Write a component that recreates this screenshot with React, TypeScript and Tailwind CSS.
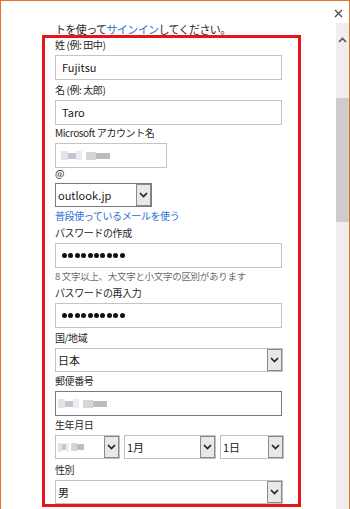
import React from 'react';

const font = "font-['Noto_Sans_CJK_JP','Noto_Sans',sans-serif]";

function Chevron({ className = '' }: { className?: string }) {
  return (
    <svg width="9" height="6" viewBox="0 0 9 6" className={className}>
      <polyline points="1,1 4.5,4.5 8,1" fill="none" stroke="#1f1f1f" strokeWidth="1.6" />
    </svg>
  );
}

function Label({ text, h }: { text: string; h: string }) {
  return (
    <div className={`flex items-end pb-[4px] text-[10px] leading-[12px] tracking-[-0.4px] text-[#262626] ${h}`}>
      {text}
    </div>
  );
}

function TextField({ value, dark }: { value?: React.ReactNode; dark?: boolean }) {
  return (
    <div
      className={`flex h-[25px] w-[227px] items-center border bg-white pl-[6px] text-[11px] text-[#1a1a1a] ${
        dark ? 'border-[#7a7a7a]' : 'border-[#c4c4c4]'
      }`}
    >
      {value}
    </div>
  );
}

function Dots() {
  return (
    <div className="flex gap-[1.4px]">
      {Array.from({ length: 10 }).map((_, i) => (
        <span key={i} className="h-[5px] w-[5px] rounded-full bg-[#111]" />
      ))}
    </div>
  );
}

function Blur({ w = 'w-[50px]' }: { w?: string }) {
  return (
    <div className={`flex h-[9px] items-center ${w}`}>
      <span className="h-[9px] w-[7px] bg-[#e4e4e8]" />
      <span className="h-[6px] w-[8px] bg-[#c7c3cf]" />
      <span className="h-[9px] w-[6px] bg-[#ececef]" />
      <span className="h-[9px] w-[4px] bg-white" />
      <span className="h-[8px] w-[10px] bg-[#d6d6da]" />
      <span className="h-[6px] w-[14px] bg-[#bcbcc2]" />
    </div>
  );
}

function Select({
  value,
  w,
  outer = 'border-[#c0c0c0]',
}: {
  value: React.ReactNode;
  w: string;
  outer?: string;
}) {
  return (
    <div className={`flex h-[24px] items-stretch border bg-white ${outer} ${w}`}>
      <div className="flex flex-1 items-center pl-[2px] text-[11px] text-[#1a1a1a]">{value}</div>
      <div className="flex w-[15px] items-center justify-center border border-[#8a8a8a] bg-[#e8e8e8]">
        <Chevron />
      </div>
    </div>
  );
}

export default function App() {
  return (
    <div className={`flex h-[509px] w-[350px] flex-col overflow-hidden border-x border-t border-[#e8702c] bg-white ${font}`}>
      <div className="flex h-[22px] shrink-0 justify-end pr-[6px] pt-[8px]">
        <svg width="9" height="9" viewBox="0 0 9 9">
          <path d="M1 1 L8 8 M8 1 L1 8" stroke="#4a4a4a" strokeWidth="1.3" />
        </svg>
      </div>

      <div className="flex flex-1">
        <main className="flex-1 pl-[41px]">
          <p className="h-[12px] pl-[13px] text-[11px] leading-[12px] tracking-[-0.6px] text-[#262626]">
            トを使って<span className="text-[#2b70d6]">サインイン</span>してください。
          </p>

          <form className="w-[259px] border-[3px] border-[#e8141c] pl-[10px]">
            <Label text="姓 (例: 田中)" h="h-[17px]" />
            <TextField value="Fujitsu" />
            <Label text="名 (例: 太郎)" h="h-[20px]" />
            <TextField value="Taro" />
            <Label text="Microsoft アカウント名" h="h-[18px]" />
            <div className="flex h-[25px] w-[112px] items-center border border-[#c4c4c4] pl-[5px]">
              <Blur />
            </div>
            <Label text="@" h="h-[15px]" />
            <Select value="outlook.jp" w="w-[97px]" outer="border-[#7a7a7a]" />
            <div className="flex h-[17px] items-end pb-[2px] text-[10px] leading-[12px] tracking-[-0.4px] text-[#2b70d6]">
              普段使っているメールを使う
            </div>
            <Label text="パスワードの作成" h="h-[19px]" />
            <TextField value={<Dots />} />
            <div className="flex h-[16px] items-end pb-[2px] text-[9.5px] leading-[11px] tracking-[-0.3px] text-[#6a6a6a]">
              8 文字以上、大文字と小文字の区別があります
            </div>
            <Label text="パスワードの再入力" h="h-[19px]" />
            <TextField value={<Dots />} />
            <Label text="国/地域" h="h-[20px]" />
            <Select value="日本" w="w-[228px]" />
            <Label text="郵便番号" h="h-[19px]" />
            <TextField dark value={<div className="-ml-[4px]"><Blur /></div>} />
            <Label text="生年月日" h="h-[19px]" />
            <div className="flex gap-[4px]">
              <Select value={<Blur w="w-[26px]" />} w="w-[65px]" />
              <Select value="1月" w="w-[92px]" />
              <Select value="1日" w="w-[64px]" />
            </div>
            <Label text="性別" h="h-[21px]" />
            <Select value="男" w="w-[228px]" />
          </form>
        </main>

        <aside className="flex w-[13px] shrink-0 flex-col bg-[#eeeeee]">
          <div className="flex h-[33px] items-center justify-center">
            <Chevron className="rotate-180 [&>polyline]:stroke-[#555]" />
          </div>
          <div className="h-[42px]" />
          <div className="h-[124px] bg-[#cdcdcd]" />
        </aside>
      </div>
    </div>
  );
}
